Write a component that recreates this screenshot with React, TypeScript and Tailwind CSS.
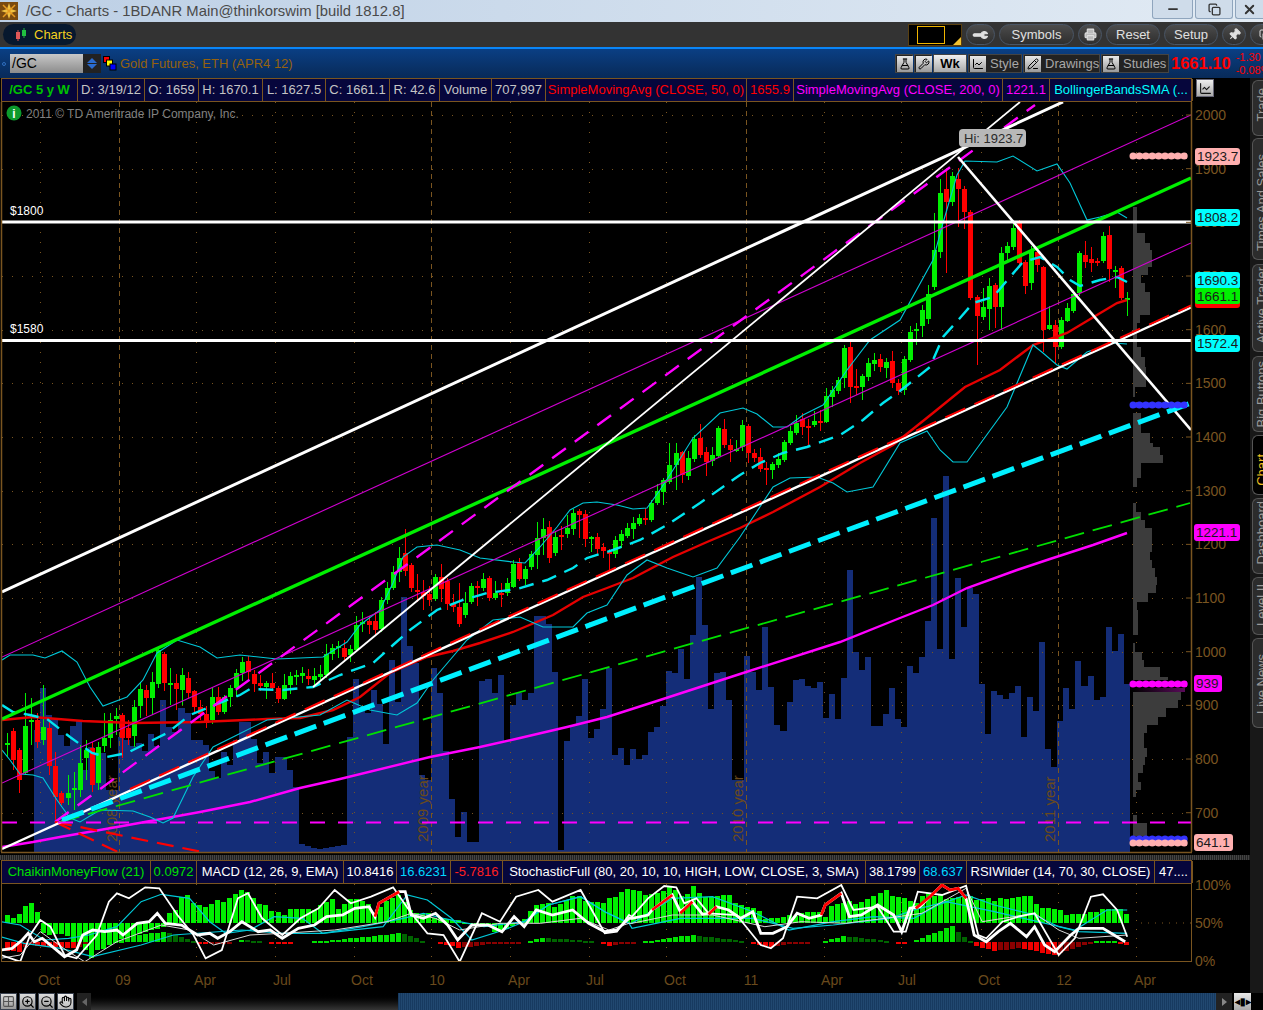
import { Wrench, Printer, Pin, Minus, X, Copy, ZoomIn, ZoomOut, Hand, Grid2x2, FlaskConical, PencilLine, ChartLine } from "lucide-react";

const py = (p: number) => 115 + (2000 - p) * 0.5367;

// volume bar tops, one per week, from x=34
const VOL = [
  730, 688, 715, 719, 735, 746, 726, 721, 770, 747, 753, 753, 790, 790, 737, 740, 746, 743, 751, 734, 746, 700, 727, 732, 708, 713,
  740, 740, 745, 771, 778, 752, 765, 740, 722, 722, 739, 763, 752, 773, 757, 757, 770, 787, 844, 846, 848, 849, 848, 847, 846, 845,
  737, 679, 707, 713, 690, 704, 744, 660, 702, 597, 646, 663, 775, 780, 668, 693, 751, 799, 837, 812, 842, 842, 681, 679, 693, 675,
  741, 705, 693, 700, 693, 616, 616, 624, 672, 850, 741, 725, 716, 679, 738, 729, 709, 668, 755, 748, 765, 749, 759, 755, 732, 727,
  706, 671, 673, 649, 679, 635, 577, 625, 709, 673, 672, 700, 780, 780,
  656, 672, 690, 627, 687, 725, 731, 702, 680, 679, 686, 688, 682, 718, 694, 719, 678, 570, 652, 670, 657, 726, 726, 714, 688, 719,
  727, 666, 673, 657, 621, 518, 649, 476, 659, 578, 627, 588, 594, 684, 734, 691, 695, 699, 693, 686, 737, 697, 711, 642, 749, 767,
  721, 688, 709, 661, 686, 676, 700, 697, 627, 651, 634, 684,
];

// candles as [open, close, wick top?, wick bottom?] in screen y
type Candle = [number, number, number?, number?];
const CANDLES: Candle[] = [
  [745, 743, 733, 757], [731, 760], [750, 780, 748, 793], [773, 726, 693, 775], [722, 720, 698, 745], [720, 742], [740, 727, 685, 745], [728, 766, 722, 775],
  [766, 797, 752, 820], [793, 803], [798, 793, 775, 805], [790, 788, 772, 810], [790, 763, 745, 797], [758, 750, 740, 780], [748, 785, 742, 792], [783, 747, 742, 790],
  [746, 738, 713, 752], [738, 720, 713, 748], [719, 716, 708, 735], [715, 738, 713, 758], [728, 738, 720, 745], [736, 707, 700, 747], [706, 689, 682, 718], [690, 698, 685, 716],
  [698, 682, 672, 715], [684, 650, 648, 688], [654, 683, 652, 691], [684, 683, 668, 705], [683, 689, 674, 710], [690, 675, 668, 705], [678, 693, 672, 698], [691, 707, 690, 712],
  [707, 714], [714, 723], [720, 697], [697, 712], [712, 697], [697, 688], [688, 673], [673, 662], [661, 672, 656, 680],
  [674, 684, 670, 692], [683, 686], [687, 683, 681, 699], [683, 688], [688, 699, 686, 703], [699, 685, 674, 700], [685, 676], [677, 675], [676, 673], [676, 679], [680, 676], [677, 674],
  [675, 654], [654, 648, 644, 660], [648, 646, 641, 658], [648, 657, 640, 660], [655, 649, 645, 662], [650, 625, 616, 652],
  [624, 622, 612, 632], [621, 625, 616, 634], [621, 630, 612, 636], [629, 600, 597, 632], [600, 588, 582, 604], [588, 572, 566, 590], [572, 558, 547, 582], [553, 571, 529, 576], [565, 588, 563, 592],
  [590, 591, 574, 602], [592, 596, 580, 610], [594, 600, 586, 606], [599, 577, 574, 601], [577, 589, 564, 602], [581, 604, 578, 610], [604, 607, 594, 612], [607, 624, 583, 627], [615, 603, 592, 618],
  [602, 586, 583, 604], [586, 587, 581, 606], [588, 579, 573, 591], [578, 598, 576, 601], [598, 593, 581, 600], [593, 595, 583, 607], [593, 583, 578, 596], [587, 564, 560, 588], [562, 579, 558, 581], [579, 569, 566, 585],
  [567, 554, 551, 570], [555, 538, 522, 569], [538, 529, 518, 555], [527, 558, 521, 563], [553, 537, 532, 556], [535, 537, 526, 550], [534, 528, 515, 538], [529, 513, 509, 535], [511, 515, 509, 538], [514, 539, 510, 547], [538, 537, 536, 552],
  [537, 549, 533, 556], [547, 551, 543, 558], [552, 553, 549, 570], [554, 540, 536, 558], [541, 534, 530, 548], [536, 528, 523, 538], [529, 523, 517, 539], [524, 518, 514, 526], [518, 519, 508, 525], [520, 503, 500, 522],
  [503, 491, 484, 505], [492, 480, 478, 505], [482, 465, 443, 484], [465, 453, 443, 490], [452, 475, 451, 483], [476, 458, 451, 480], [459, 439, 435, 462], [438, 455, 424, 458], [452, 462, 447, 476], [461, 455, 447, 466], [456, 428, 426, 458], [429, 445, 419, 448], [445, 450, 439, 462], [450, 449, 440, 452],
  [447, 425, 420, 451], [426, 453, 424, 463], [453, 458, 449, 462], [457, 469, 448, 472], [468, 469, 462, 485], [470, 464, 462, 479], [465, 459, 453, 468], [460, 442, 440, 462], [443, 431, 426, 445], [433, 423, 415, 435], [419, 427, 413, 435],
  [426, 427, 419, 445], [425, 421, 411, 427], [421, 423, 410, 431], [422, 396, 388, 423], [397, 390, 386, 407], [391, 380, 377, 394], [378, 348, 345, 388], [347, 387, 342, 403], [386, 387, 369, 395], [387, 376, 374, 400], [377, 363, 358, 381], [364, 360, 353, 371], [359, 367, 354, 372],
  [368, 362, 358, 378], [361, 383, 351, 388], [383, 391, 379, 395], [390, 359, 356, 395],
  [360, 332, 326, 362], [331, 329, 323, 345], [326, 310, 305, 337], [319, 294, 285, 324], [287, 250, 213, 290], [252, 193, 179, 258], [189, 202, 168, 273], [202, 176, 172, 206], [179, 189, 168, 227], [189, 212, 186, 229],
  [212, 298, 210, 300], [297, 316, 295, 365], [317, 307, 288, 320], [309, 286, 278, 330], [285, 307, 283, 328], [307, 253, 247, 330], [253, 246, 242, 260], [247, 228, 224, 250], [223, 263, 220, 268], [262, 286, 260, 294], [283, 250, 246, 290], [252, 265, 250, 272],
  [267, 330, 266, 352], [329, 325, 306, 330], [325, 347, 320, 363], [347, 320, 317, 349], [321, 308, 303, 322], [311, 294, 290, 313], [293, 253, 251, 296], [255, 262, 241, 268], [259, 263, 247, 272], [261, 263, 258, 266], [261, 236, 232, 263], [235, 269, 226, 282], [271, 270, 266, 288], [268, 298, 266, 300], [299, 298, 292, 316],
];

const SMA200 = "2,847 33,842 60,837 117,827 167,818 200,812 250,802 300,788 340,779 430,757 480,747 520,738 567,727 607,717 660,700 740,674 840,642 900,618 933,605 967,588 1017,570 1050,559 1093,545 1127,533";
const SMA50 = "2,720 33,717 83,721 133,723 200,722 267,719 300,718 333,710 360,697 390,673 427,657 453,651 480,643 513,632 553,615 583,597 607,588 633,578 673,557 707,542 740,528 773,512 820,487 860,463 893,445 933,413 965,387 1000,370 1033,345 1067,333 1097,315 1117,303 1127,300";
const BB_UP = "2,660 10,655 33,655 45,658 62,651 77,662 90,687 103,706 127,697 143,680 157,653 177,640 200,647 217,658 240,655 277,659 323,657 347,642 360,625 380,610 393,583 403,557 417,547 437,545 460,550 480,558 513,562 525,563 540,547 557,527 570,510 583,503 597,502 617,505 633,509 647,508 660,490 673,470 693,438 720,413 743,408 757,414 773,427 787,427 803,415 823,405 847,370 870,340 900,320 933,260 943,223 957,175 965,161 997,162 1013,156 1037,171 1057,164 1070,183 1087,220 1100,217 1117,212 1127,218";
const BB_LOW = "2,750 10,760 20,774 33,775 43,778 57,800 70,818 80,822 100,810 133,811 150,817 163,823 173,818 193,777 213,747 237,735 267,720 320,715 347,700 370,710 397,715 417,703 433,680 450,660 467,640 493,620 520,617 543,627 573,627 587,613 607,605 627,575 647,560 667,568 693,577 717,568 740,537 773,487 790,478 817,477 833,483 847,492 873,487 900,443 927,431 940,450 953,462 967,462 1007,407 1033,345 1043,353 1057,365 1067,369 1087,352 1113,343 1127,344";
const BB_MID = "2,705 13,712 30,715 47,719 70,737 92,753 107,757 127,753 143,745 167,733 190,715 207,708 240,695 250,689 283,690 313,687 340,675 373,663 393,645 410,630 437,610 463,600 487,593 517,589 547,580 573,568 587,558 613,550 640,540 667,525 700,503 740,475 760,463 783,453 807,447 840,435 863,420 883,403 900,391 930,367 943,337 960,318 973,303 993,297 1010,277 1023,262 1040,257 1057,267 1070,280 1080,286 1100,280 1117,277 1127,282";

// volume profile steps: [top, bottom, right x]
const PROFILE: [number, number, number][] = [
  [207, 217, 1137], [217, 233, 1137], [233, 243, 1145], [243, 250, 1150], [250, 267, 1152], [267, 275, 1148], [275, 283, 1141], [283, 292, 1145], [292, 315, 1150], [315, 323, 1140], [323, 347, 1137],
  [347, 357, 1141], [357, 367, 1145], [367, 387, 1146], [387, 397, 1135], [413, 433, 1141], [433, 443, 1150], [443, 447, 1153], [447, 455, 1160], [455, 463, 1163], [463, 478, 1141], [478, 487, 1137],
  [480, 487, 1137], [503, 512, 1136], [512, 520, 1141], [520, 528, 1145], [528, 552, 1152], [552, 560, 1150], [560, 568, 1152], [568, 577, 1155], [577, 585, 1157], [585, 593, 1156], [593, 602, 1148], [602, 610, 1137],
  [610, 635, 1138], [643, 652, 1135], [652, 660, 1142], [660, 667, 1144], [667, 677, 1160], [677, 680, 1168], [690, 700, 1181], [700, 708, 1178], [708, 717, 1166], [717, 725, 1158], [725, 733, 1147], [733, 748, 1144],
  [748, 757, 1147], [757, 765, 1145], [765, 773, 1143], [773, 782, 1138], [782, 790, 1141], [790, 797, 1136], [815, 823, 1137], [823, 836, 1147],
];

const interp = (pts: [number, number][], x: number) => {
  if (x <= pts[0][0]) return pts[0][1];
  for (let i = 1; i < pts.length; i++) {
    if (x <= pts[i][0]) {
      const [x0, y0] = pts[i - 1];
      const [x1, y1] = pts[i];
      return y0 + ((y1 - y0) * (x - x0)) / (x1 - x0);
    }
  }
  return pts[pts.length - 1][1];
};

// lower panel readings are given as pairs on two crops, left half and right half
const left = (a: number[]): [number, number][] => {
  const out: [number, number][] = [];
  for (let i = 0; i < a.length; i += 2) out.push([a[i] / 2.48, 855 + a[i + 1] / 3]);
  return out;
};
const right = (a: number[]): [number, number][] => {
  const out: [number, number][] = [];
  for (let i = 0; i < a.length; i += 2) out.push([632 + a[i] / 2.484, 855 + a[i + 1] / 3]);
  return out;
};
const line = (p: [number, number][]) => p.map(([x, y]) => `${x.toFixed(1)},${y.toFixed(1)}`).join(" ");

const CMF = [
  ...left([17, 187, 45, 178, 60, 158, 75, 140, 92, 172, 110, 235, 150, 237, 170, 250, 190, 262, 210, 280, 228, 315, 245, 285, 265, 270, 285, 265, 340, 235, 400, 225, 420, 170, 435, 165, 450, 130, 465, 125, 490, 145, 510, 155, 540, 142, 570, 125, 600, 108, 630, 125, 645, 145, 660, 150, 675, 175, 700, 178, 720, 160, 770, 170, 790, 150, 825, 135, 840, 170, 855, 140, 875, 125, 910, 150, 930, 170, 960, 135, 990, 125, 1005, 135, 1020, 165, 1040, 178, 1090, 185, 1130, 200, 1180, 205, 1220, 225, 1260, 222, 1290, 205, 1310, 170, 1330, 150, 1380, 150, 1420, 125, 1480, 140, 1500, 150, 1520, 125, 1550, 100]),
  ...right([20, 115, 75, 112, 95, 100, 115, 100, 130, 135, 150, 90, 165, 120, 240, 125, 275, 150, 305, 165, 330, 185, 380, 190, 425, 170, 480, 180, 495, 150, 565, 140, 600, 125, 615, 125, 630, 95, 650, 125, 670, 125, 690, 145, 710, 135, 730, 110, 750, 125, 885, 130, 905, 145, 925, 125, 985, 125, 1020, 155, 1060, 170, 1135, 180, 1150, 165, 1170, 160, 1230, 170]),
];
const MACD: [number, number][] = [
  [3, -8], [20, -10], [28, -3], [52, -5], [76, -6], [90, 0], [119, 0], [125, 6], [165, 10], [190, 2], [197, 0], [204, -2], [232, -1], [238, 0], [240, 2], [262, 1], [268, 0], [274, -1], [292, -1], [300, 0], [325, 1], [403, 9], [423, 1], [432, 0], [440, -1], [460, -6], [490, -2], [520, -1], [526, 0], [530, 1], [542, 4], [592, 1], [598, 0], [602, -1], [609, -4], [632, -1], [640, 0], [648, 1], [692, 7], [745, 1], [750, -1], [769, -5], [797, -1], [820, 0], [825, 1], [843, 6], [888, 1], [892, 0], [896, -1], [906, -1], [910, 0], [914, 1], [952, 16], [968, 2], [972, 0], [974, -3], [994, -9], [1020, -6], [1055, -13], [1087, -2], [1092, 0], [1095, 1], [1115, 1], [1119, 0], [1123, -3], [1129, -3],
];

const RSI = [
  ...left([2, 285, 30, 280, 55, 255, 70, 235, 85, 260, 105, 250, 130, 275, 160, 305, 190, 285, 205, 240, 230, 225, 260, 230, 290, 225, 305, 240, 340, 205, 370, 200, 390, 175, 410, 205, 450, 210, 490, 240, 520, 235, 540, 250, 570, 230, 600, 200, 640, 230, 670, 225, 700, 250, 740, 220, 780, 210, 810, 185, 850, 180, 880, 160, 915, 155, 930, 185, 940, 145, 990, 110, 1005, 110, 1020, 180, 1050, 190, 1080, 175, 1110, 210, 1135, 255, 1170, 210, 1210, 210, 1245, 230, 1275, 185, 1300, 215, 1330, 165, 1370, 180, 1420, 165, 1460, 205, 1500, 230, 1530, 225, 1560, 190]),
  ...right([0, 190, 40, 180, 50, 165, 100, 120, 120, 170, 150, 140, 175, 178, 190, 175, 210, 155, 240, 165, 270, 190, 300, 170, 320, 235, 350, 235, 385, 215, 410, 175, 440, 190, 470, 180, 480, 150, 520, 115, 540, 185, 570, 180, 610, 150, 650, 180, 670, 230, 690, 160, 715, 155, 740, 125, 770, 90, 790, 105, 810, 100, 830, 130, 850, 240, 880, 260, 910, 230, 940, 205, 980, 245, 1000, 215, 1025, 270, 1050, 290, 1090, 240, 1110, 220, 1170, 220, 1190, 235, 1225, 260]),
];
const STOCH = [
  ...left([2, 300, 50, 320, 75, 240, 100, 195, 125, 215, 160, 300, 190, 310, 240, 240, 270, 140, 290, 115, 320, 130, 360, 97, 395, 100, 440, 180, 480, 240, 510, 310, 550, 285, 590, 130, 615, 115, 650, 190, 700, 240, 745, 190, 790, 160, 830, 105, 870, 145, 920, 125, 975, 97, 1020, 175, 1060, 235, 1100, 240, 1140, 320, 1195, 175, 1240, 200, 1280, 125, 1335, 105, 1370, 140, 1440, 105, 1500, 235, 1530, 230, 1560, 180]),
  ...right([0, 185, 40, 130, 80, 93, 110, 97, 130, 145, 160, 130, 190, 175, 260, 180, 320, 270, 345, 280, 375, 250, 410, 125, 460, 130, 520, 90, 550, 165, 610, 155, 650, 230, 680, 230, 710, 110, 770, 120, 830, 92, 860, 240, 880, 250, 920, 200, 960, 185, 1000, 175, 1060, 300, 1100, 250, 1140, 125, 1170, 118, 1205, 165, 1230, 245]),
];
const SLOW = [
  ...left([2, 310, 50, 300, 100, 230, 170, 290, 210, 320, 290, 260, 400, 210, 470, 225, 530, 270, 620, 240, 700, 235, 830, 225, 960, 200, 1020, 175, 1080, 190, 1140, 225, 1240, 205, 1340, 205, 1440, 190, 1510, 225, 1560, 205]),
  ...right([0, 205, 100, 180, 200, 180, 330, 215, 420, 200, 530, 205, 660, 185, 720, 175, 830, 100, 870, 200, 1000, 175, 1060, 225, 1110, 250, 1230, 240]),
];
const CYAN_A = [
  ...left([2, 200, 50, 210, 110, 255, 170, 250, 220, 240, 290, 215, 350, 140, 400, 118, 470, 130, 520, 200, 560, 235, 620, 225, 680, 185, 750, 190, 800, 235, 900, 215, 1000, 190, 1050, 175, 1100, 190, 1200, 215, 1300, 200, 1360, 150, 1440, 125, 1500, 170, 1560, 205]),
  ...right([0, 205, 100, 130, 200, 125, 300, 170, 390, 225, 500, 200, 600, 185, 700, 190, 760, 150, 830, 120, 900, 150, 1000, 180, 1060, 215, 1110, 230, 1230, 235]),
];
const CYAN_B = [
  ...left([2, 245, 60, 265, 150, 280, 230, 305, 350, 270, 430, 240, 600, 225, 700, 235, 800, 235, 950, 215, 1010, 120, 1060, 135, 1120, 190, 1170, 255, 1250, 225, 1300, 200, 1360, 150, 1440, 125, 1500, 170, 1560, 205]),
  ...right([0, 220, 120, 190, 300, 190, 400, 220, 500, 210, 640, 190, 700, 165, 780, 140, 900, 170, 1100, 225, 1180, 165, 1230, 165]),
];
const RED_SEGS = [
  left([930, 185, 940, 145, 990, 110]),
  right([50, 165, 100, 120]),
  right([120, 175, 150, 140]),
  right([190, 178, 210, 155]),
  right([470, 180, 480, 150, 520, 115]),
  right([705, 160, 740, 125, 770, 90, 790, 105, 810, 100, 830, 130]),
];

const PRICES = [2000, 1900, 1800, 1700, 1600, 1500, 1400, 1300, 1200, 1100, 1000, 900, 800, 700];
const TICKS = [40, 118.5, 196, 275, 353.6, 431, 510, 589, 666, 745.5, 823.6, 901, 980.6, 1058.3, 1136.4];
const YEARS = [118.5, 431, 745.5, 1058.3];
const LEVEL_TAGS = [
  { label: "1923.7", x: 1195, y: 148, w: 45, bg: "#ffb0b0" },
  { label: "1808.2", x: 1195, y: 209, w: 45, bg: "#00ffff" },
  { label: "1690.3", x: 1195, y: 272, w: 45, bg: "#00ffff" },
  { label: "1572.4", x: 1195, y: 335, w: 45, bg: "#00ffff" },
  { label: "1221.1", x: 1194, y: 524, w: 46, bg: "#ff00ff" },
  { label: "939", x: 1194, y: 675, w: 28, bg: "#ff00ff" },
  { label: "641.1", x: 1194, y: 834, w: 39, bg: "#ffb0b0" },
];
const DOTS = [
  { y: 156, x: 1133, c: "#ffb0b0" },
  { y: 405, x: 1133, c: "#3333ff" },
  { y: 684, x: 1133, c: "#ff00ff" },
  { y: 839, x: 1133, c: "#3333ff" },
  { y: 843, x: 1133, c: "#ffb0b0" },
];

function MainChart() {
  return (
    <svg width={1250} height={753} viewBox="0 102 1250 753" className="block bg-black">
      <defs>
        <clipPath id="plot">
          <rect x={2} y={102} width={1189} height={750} />
        </clipPath>
        <linearGradient id="poc" x1="0" x2="1" y1="0" y2="0">
          <stop offset="0" stopColor="#000000" />
          <stop offset="1" stopColor="#5a0a5a" />
        </linearGradient>
      </defs>
      <g clipPath="url(#plot)">
        {VOL.map((t, i) => {
          const x = Math.round(34 + 6.02 * i);
          const next = Math.round(34 + 6.02 * (i + 1));
          return <rect key={i} x={x} y={t} width={next - x} height={852 - t} fill="#142d78" shapeRendering="crispEdges" />;
        })}
        {PRICES.map((p) => (
          <line key={p} x1={2} x2={1191} y1={Math.round(py(p)) + 0.5} y2={Math.round(py(p)) + 0.5} stroke="#7a5520" strokeDasharray="1 9" />
        ))}
        {TICKS.map((x) => (
          <line
            key={x}
            x1={Math.round(x) + 0.5}
            x2={Math.round(x) + 0.5}
            y1={102}
            y2={852}
            stroke="#7a5520"
            strokeDasharray={YEARS.includes(x) ? "5 4" : "1 9"}
          />
        ))}
        {PROFILE.map(([a, b, r], i) => (
          <rect key={i} x={1133} y={a} width={r - 1133} height={b - a} fill="#3c3c3c" shapeRendering="crispEdges" />
        ))}
        <rect x={1133} y={688} width={52} height={4} fill="url(#poc)" />
        {[
          ["2008 year", 117],
          ["2009 year", 428],
          ["2010 year", 743],
          ["2011 year", 1055],
        ].map(([t, x]) => (
          <text key={t} transform={`rotate(-90 ${x} 842)`} x={x} y={842} fontSize={15} fill="#6a4a1c">
            {t}
          </text>
        ))}

        {CANDLES.map(([o, c, hi, lo], k) => {
          const x = Math.round(7.3 + 6.02 * k);
          const up = c < o;
          const col = up ? "#00f000" : "#ff0000";
          const top = Math.min(o, c);
          const bottom = Math.max(o, c);
          return (
            <g key={k} shapeRendering="crispEdges">
              <rect x={x} y={hi ?? top - 2 - ((k * 37) % 9)} width={1} height={(lo ?? bottom + 2 + ((k * 53) % 9)) - (hi ?? top - 2 - ((k * 37) % 9))} fill={col} />
              <rect x={x - 2} y={top} width={5} height={Math.max(bottom - top, 2)} fill={col} />
            </g>
          );
        })}

        <polyline points={SMA200} fill="none" stroke="#ff00ff" strokeWidth={2.4} />
        <polyline points={SMA50} fill="none" stroke="#e60000" strokeWidth={2.4} />
        <polyline points={BB_UP} fill="none" stroke="#00c8d8" strokeWidth={1.1} />
        <polyline points={BB_LOW} fill="none" stroke="#00c8d8" strokeWidth={1.1} />
        <polyline points={BB_MID} fill="none" stroke="#00e6f0" strokeWidth={2.4} strokeDasharray="15 9" />

        <line x1={2} y1={657} x2={1191} y2={115} stroke="#d000d0" strokeWidth={1.1} />
        <line x1={2} y1={783} x2={1191} y2={243} stroke="#d000d0" strokeWidth={1.1} />
        <line x1={2} y1={719} x2={1191} y2={178} stroke="#00f000" strokeWidth={3.4} />
        <line x1={55} y1={822} x2={1035} y2={105} stroke="#ff00ff" strokeWidth={2.4} strokeDasharray="17 11" />
        <line x1={2} y1={592} x2={1063} y2={102} stroke="#ffffff" strokeWidth={3} />
        <line x1={313} y1={687} x2={1020} y2={102} stroke="#ffffff" strokeWidth={1.8} />
        <line x1={958} y1={157} x2={1191} y2={430} stroke="#ffffff" strokeWidth={2.6} />
        <line x1={55} y1={822} x2={207} y2={853} stroke="#ff0000" strokeWidth={2.2} strokeDasharray="17 9" />
        <line x1={55} y1={822} x2={120} y2={853} stroke="#ff0000" strokeWidth={2.2} strokeDasharray="17 9" />
        <line x1={2} y1={849} x2={1191} y2={307.5} stroke="#ffffff" strokeWidth={2.4} />
        <line x1={130} y1={789} x2={1191} y2={305.5} stroke="#ff0000" strokeWidth={2} strokeDasharray="22 10" />
        <line x1={60} y1={822} x2={1190} y2={503} stroke="#00e000" strokeWidth={1.8} strokeDasharray="20 9" />
        <line x1={62} y1={820} x2={1191} y2={403} stroke="#00f0ff" strokeWidth={5} strokeDasharray="23 8" />
        <line x1={2} y1={822.5} x2={1191} y2={822.5} stroke="#ff00ff" strokeWidth={1.8} strokeDasharray="15 13" />
        <line x1={2} y1={222} x2={1191} y2={222} stroke="#ffffff" strokeWidth={3} />
        <line x1={2} y1={340.5} x2={1191} y2={340.5} stroke="#ffffff" strokeWidth={3} />

        {DOTS.map((d) => (
          <g key={d.y}>
            <line x1={d.x} x2={1187} y1={d.y} y2={d.y} stroke={d.c} strokeWidth={7} strokeLinecap="round" strokeDasharray="0 6.4" />
            <line x1={d.x} x2={1187} y1={d.y} y2={d.y} stroke={d.c} strokeWidth={5} />
          </g>
        ))}
      </g>

      <text x={10} y={215} fontSize={12} fill="#ffffff">$1800</text>
      <text x={10} y={333} fontSize={12} fill="#ffffff">$1580</text>

      <rect x={959} y={129} width={67} height={18} rx={4} fill="#b8b8b8" />
      <text x={964} y={143} fontSize={13} fill="#2a2a2a">Hi: 1923.7</text>

      <circle cx={14} cy={113} r={7.5} fill="#0c9a2c" />
      <text x={14} y={118} fontSize={12} fontWeight={700} fill="#ffffff" textAnchor="middle">i</text>
      <text x={26} y={118} fontSize={12} fill="#808080">2011 © TD Ameritrade IP Company, Inc.</text>

      <line x1={1.5} x2={1.5} y1={102} y2={852} stroke="#7a5520" strokeWidth={1.5} />
      <line x1={1191.5} x2={1191.5} y1={102} y2={852} stroke="#7a5520" strokeWidth={1.5} />
      <line x1={1} x2={1192} y1={852.5} y2={852.5} stroke="#7a5520" strokeWidth={1.5} />

      {PRICES.map((p) => (
        <g key={p}>
          <line x1={1186} x2={1191} y1={py(p)} y2={py(p)} stroke="#7a5520" />
          <text x={1195} y={py(p) + 5} fontSize={14} fill="#7a5520">{p}</text>
        </g>
      ))}

      {LEVEL_TAGS.map((t) => (
        <g key={t.label}>
          <rect x={t.x} y={t.y} width={t.w} height={17} rx={3} fill={t.bg} />
          <text x={t.x + 2} y={t.y + 13} fontSize={13.5} fill="#1a1a1a">{t.label}</text>
        </g>
      ))}
      <rect x={1195} y={288} width={45} height={20} rx={3} fill="#ff0000" />
      <rect x={1195} y={288} width={45} height={16} rx={2} fill="#00f000" />
      <text x={1197} y={301} fontSize={13.5} fill="#1a1a1a">1661.1</text>
    </svg>
  );
}

function LowerChart() {
  return (
    <svg width={1250} height={110} viewBox="0 883 1250 110" className="block overflow-visible bg-black">
      <defs>
        <clipPath id="lower">
          <rect x={2} y={884} width={1189} height={77} />
        </clipPath>
      </defs>
      {TICKS.map((x) => (
        <line key={x} x1={Math.round(x) + 0.5} x2={Math.round(x) + 0.5} y1={884} y2={962} stroke="#7a5520" strokeDasharray="1 8" />
      ))}
      <g clipPath="url(#lower)">
        {Array.from({ length: 187 }).map((_, k) => {
          const x = Math.round(4.6 + 6.02 * k);
          const y = Math.round(interp(CMF, x + 2.5) + ((k * 29) % 5) - 2);
          return <rect key={k} x={x} y={Math.min(y, 923)} width={5} height={Math.abs(923 - y)} fill="#00f000" shapeRendering="crispEdges" />;
        })}
        {Array.from({ length: 187 }).map((_, k) => {
          const x = Math.round(4.6 + 6.02 * k);
          const h = interp(MACD, x + 2.5);
          const prev = interp(MACD, x - 3.5);
          if (Math.abs(h) < 0.5) return null;
          const col = h > 0 ? (h >= prev ? "#00e000" : "#006400") : h <= prev ? "#f00000" : "#8a0000";
          return <rect key={k} x={x} y={Math.round(h > 0 ? 942 - h : 942)} width={5} height={Math.max(Math.round(Math.abs(h)), 2)} fill={col} shapeRendering="crispEdges" />;
        })}
        <line x1={1191} x2={1136} y1={923} y2={923} stroke="#7a5520" strokeDasharray="1 6" />
        <polyline points={line(CYAN_A)} fill="none" stroke="#00c8d8" strokeWidth={1.2} />
        <polyline points={line(CYAN_B)} fill="none" stroke="#00c8d8" strokeWidth={1.2} />
        <polyline points={line(SLOW)} fill="none" stroke="#d8d8d8" strokeWidth={1} />
        <polyline points={line(STOCH)} fill="none" stroke="#ffffff" strokeWidth={1.8} />
        <polyline points={line(RSI)} fill="none" stroke="#ffffff" strokeWidth={2.8} />
        {RED_SEGS.map((s, i) => (
          <polyline key={i} points={line(s)} fill="none" stroke="#ff0000" strokeWidth={2.8} />
        ))}
      </g>
      <rect x={1.5} y={883.5} width={1190} height={78} fill="none" stroke="#7a5520" strokeWidth={1} />
      {[
        ["100%", 890],
        ["50%", 928],
        ["0%", 966],
      ].map(([t, y]) => (
        <text key={t} x={1195} y={y} fontSize={14} fill="#7a5520">{t}</text>
      ))}
      {[
        ["Oct", 49],
        ["09", 123],
        ["Apr", 205],
        ["Jul", 282],
        ["Oct", 362],
        ["10", 437],
        ["Apr", 519],
        ["Jul", 595],
        ["Oct", 675],
        ["11", 751],
        ["Apr", 832],
        ["Jul", 907],
        ["Oct", 989],
        ["12", 1064],
        ["Apr", 1145],
      ].map(([t, x]) => (
        <text key={`${t}${x}`} x={x} y={985} fontSize={14} fill="#6a4a1c" textAnchor="middle">{t}</text>
      ))}
    </svg>
  );
}

function Cell({ w, color, bold, children }: { w: number; color: string; bold?: boolean; children: string }) {
  return (
    <div
      style={{ width: w, color }}
      className={`flex h-full shrink-0 items-center justify-center overflow-hidden whitespace-nowrap border-r border-[#7a5520] text-[13px] ${bold ? "font-bold" : ""}`}
    >
      {children}
    </div>
  );
}

const TOP_CELLS: [number, string, string, boolean?][] = [
  [76, "#00c000", "/GC 5 y W", true],
  [67, "#c4c4c4", "D: 3/19/12"],
  [54, "#c4c4c4", "O: 1659"],
  [64, "#c4c4c4", "H: 1670.1"],
  [63, "#c4c4c4", "L: 1627.5"],
  [64, "#c4c4c4", "C: 1661.1"],
  [50, "#c4c4c4", "R: 42.6"],
  [52, "#c4c4c4", "Volume"],
  [54, "#c4c4c4", "707,997"],
  [201, "#ff0000", "SimpleMovingAvg (CLOSE, 50, 0)"],
  [47, "#ff0000", "1655.9"],
  [209, "#ff00ff", "SimpleMovingAvg (CLOSE, 200, 0)"],
  [47, "#ff00ff", "1221.1"],
  [143, "#00ffff", "BollingerBandsSMA (..."],
];
const LOW_CELLS: [number, string, string][] = [
  [149, "#00e000", "ChaikinMoneyFlow (21)"],
  [46, "#00e000", "0.0972"],
  [147, "#ffffff", "MACD (12, 26, 9, EMA)"],
  [53, "#ffffff", "10.8416"],
  [54, "#00d8ff", "16.6231"],
  [52, "#ff2020", "-5.7816"],
  [363, "#ffffff", "StochasticFull (80, 20, 10, 10, HIGH, LOW, CLOSE, 3, SMA)"],
  [54, "#ffffff", "38.1799"],
  [47, "#00d8ff", "68.637"],
  [188, "#ffffff", "RSIWilder (14, 70, 30, CLOSE)"],
  [38, "#ffffff", "47...."],
];

function Pill({ children, w }: { children: React.ReactNode; w: number }) {
  return (
    <div
      style={{ width: w }}
      className="flex h-[21px] shrink-0 items-center justify-center rounded-full border border-[#4a5666] bg-linear-to-b from-[#4c4c4c] to-[#2e2e2e] text-[13px] text-[#e0e0e0]"
    >
      {children}
    </div>
  );
}

function ToolBtn({ children, w, wide }: { children: React.ReactNode; w: number; wide?: boolean }) {
  return (
    <div
      style={{ width: w }}
      className={`flex h-[19px] shrink-0 items-center gap-1 border border-[#444] bg-[#222] pl-px text-[13px] text-[#a8a8a8] ${wide ? "" : "justify-center"}`}
    >
      {children}
    </div>
  );
}

function IconBox({ children }: { children: React.ReactNode }) {
  return (
    <div className="flex h-4 w-4 shrink-0 items-center justify-center bg-linear-to-b from-[#e8e8e8] to-[#9a9a9a] text-black">{children}</div>
  );
}

function Tab({ h, label, active, mt = 0, pb = 8 }: { h: number; label: string; active?: boolean; mt?: number; pb?: number }) {
  return (
    <div
      style={{ height: h, marginTop: mt }}
      className={`relative w-[11px] overflow-hidden rounded-tl-[6px] rounded-bl-[6px] border-l border-t border-b border-[#555] ${active ? "bg-black" : "bg-[#2c2c2c]"}`}
    >
      <span
        style={{ bottom: pb }}
        className={`absolute left-[2px] whitespace-nowrap text-[13px] leading-[14px] [writing-mode:vertical-rl] rotate-180 ${active ? "text-[#f0c020]" : "text-[#9a9a9a]"}`}
      >
        {label}
      </span>
    </div>
  );
}

export default function App() {
  return (
    <div className="flex h-[1010px] w-[1263px] flex-col overflow-hidden bg-black [font-family:'Liberation_Sans',Arial,sans-serif]">
      {/* title bar */}
      <div className="flex h-[22px] shrink-0 items-start bg-linear-to-r from-[#bccfe5] to-[#e2ebf4]">
        <svg width={18} height={18} viewBox="0 0 18 18" className="mt-0.5 shrink-0">
          <rect width={18} height={18} fill="#7a4a10" />
          <path d="M9 1 L11 7 L17 9 L11 11 L9 17 L7 11 L1 9 L7 7 Z" fill="#f0c040" />
          <path d="M3 3 L15 15 M15 3 L3 15" stroke="#e89a20" strokeWidth={1.5} />
        </svg>
        <span className="ml-2 mt-0.5 text-[14.8px] leading-[18px] text-[#4a4a4a]">/GC - Charts - 1BDANR Main@thinkorswim [build 1812.8]</span>
        <div className="ml-auto flex h-[19px] gap-0.5">
          <div className="flex w-[41px] items-center justify-center rounded-b-[3px] border border-t-0 border-[#8fa5bd] bg-[#cfdcea] text-[#333]">
            <Minus size={14} strokeWidth={3} />
          </div>
          <div className="flex w-[38px] items-center justify-center rounded-b-[3px] border border-t-0 border-[#8fa5bd] bg-[#cfdcea] text-[#333]">
            <Copy size={13} strokeWidth={2.4} />
          </div>
          <div className="flex w-[28px] items-center justify-center rounded-bl-[3px] border border-t-0 border-r-0 border-[#8fa5bd] bg-[#cfdcea] text-[#333]">
            <X size={15} strokeWidth={3} />
          </div>
        </div>
      </div>

      {/* workspace toolbar */}
      <div className="flex h-[25px] shrink-0 items-center bg-[#333333]">
        <div className="ml-[3px] flex h-[21px] w-[73px] shrink-0 items-center gap-1.5 rounded-full bg-[#07182e] pl-[11px] text-[13px] text-[#f4d020]">
          <svg width={14} height={14} viewBox="0 0 14 14" className="shrink-0">
            <path d="M4 2 V13" stroke="#d05050" />
            <rect x={2} y={4} width={4} height={7} fill="#e05858" />
            <path d="M10 0 V10" stroke="#20b040" />
            <rect x={8} y={2} width={4} height={6} fill="#20c040" />
          </svg>
          Charts
        </div>
        <div className="relative ml-[832px] flex h-[22px] w-[54px] shrink-0 items-center border border-[#5a4010] bg-black pl-2">
          <div className="h-[18px] w-7 border border-[#f0b400]" />
          <div className="absolute bottom-0 right-0 h-0 w-0 border-b-[8px] border-l-[8px] border-b-[#f0c030] border-l-transparent" />
        </div>
        <div className="ml-1 flex items-center gap-1">
          <Pill w={29}>
            <Wrench size={14} className="rotate-45" fill="#e0e0e0" />
          </Pill>
          <Pill w={75}>Symbols</Pill>
          <Pill w={24}>
            <Printer size={13} fill="#bbb" />
          </Pill>
          <Pill w={54}>Reset</Pill>
          <Pill w={54}>Setup</Pill>
          <Pill w={24}>
            <Pin size={13} className="rotate-45" fill="#e0e0e0" />
          </Pill>
          <Pill w={30}>
            <Copy size={12} />
          </Pill>
        </div>
      </div>
      <div className="h-[2px] shrink-0 bg-[#0a86f8]" />

      {/* symbol row */}
      <div className="flex h-[29px] shrink-0 items-center bg-linear-to-b from-[#0a3f84] to-[#082a58]">
        <div className="ml-0.5 h-1 w-1 shrink-0 rounded-full border border-[#3070c0]" />
        <div className="ml-1 flex h-[19px] w-[73px] shrink-0 items-center bg-linear-to-b from-[#c8c8c8] to-[#8c8c8c] pl-0.5 text-[14px] text-black">/GC</div>
        <div className="flex h-[19px] w-[18px] shrink-0 flex-col items-center justify-center gap-px bg-[#222]">
          <div className="h-0 w-0 border-x-[5px] border-b-[5px] border-x-transparent border-b-[#2a6cd0]" />
          <div className="h-0 w-0 border-x-[5px] border-t-[5px] border-x-transparent border-t-[#2a6cd0]" />
        </div>
        <svg width={14} height={15} viewBox="0 0 14 15" className="ml-[2px] shrink-0">
          <rect x={0.5} y={0.5} width={6} height={6} fill="#ff0000" stroke="#000" />
          <rect x={3.5} y={4} width={6} height={6} fill="#ffff00" stroke="#000" />
          <rect x={7} y={8} width={6} height={6} fill="#0000ff" stroke="#000" />
        </svg>
        <span className="ml-[3px] w-[172px] shrink-0 whitespace-nowrap text-[13px] text-[#96620e]">Gold Futures, ETH (APR4 12)</span>
        <div className="ml-[603px] flex h-[19px] shrink-0 items-center gap-px">
          <ToolBtn w={18}>
            <IconBox>
              <FlaskConical size={12} />
            </IconBox>
          </ToolBtn>
          <ToolBtn w={18}>
            <IconBox>
              <Wrench size={12} />
            </IconBox>
          </ToolBtn>
          <div className="flex h-[19px] w-[34px] items-center justify-center border border-[#444] bg-linear-to-b from-[#f0f0f0] to-[#aaaaaa] text-[13px] font-bold text-black">Wk</div>
          <ToolBtn w={54} wide>
            <IconBox>
              <ChartLine size={12} />
            </IconBox>
            Style
          </ToolBtn>
          <ToolBtn w={77} wide>
            <IconBox>
              <PencilLine size={12} />
            </IconBox>
            Drawings
          </ToolBtn>
          <ToolBtn w={68} wide>
            <IconBox>
              <FlaskConical size={12} />
            </IconBox>
            Studies
          </ToolBtn>
        </div>
        <span className="ml-0.5 shrink-0 text-[16.5px] font-bold text-[#ff0000]">1661.10</span>
        <div className="ml-[5px] flex flex-col text-[11px] leading-[13px] text-[#ff0000]">
          <span>-1.30</span>
          <span className="whitespace-nowrap">-0.08%</span>
        </div>
      </div>

      <div className="flex min-h-0 flex-1">
        <div className="flex w-[1250px] shrink-0 flex-col">
          {/* study header */}
          <div className="flex h-6 shrink-0">
            <div className="ml-px flex h-6 w-[1191px] border border-[#7a5520] bg-[#06063c]">
              {TOP_CELLS.map(([w, c, t, b]) => (
                <Cell key={t} w={w} color={c} bold={b}>
                  {t}
                </Cell>
              ))}
            </div>
            <div className="ml-[4px] mt-px flex h-[18px] w-[18px] items-center justify-center border border-[#667] bg-linear-to-b from-[#eeeeee] to-[#aaaaaa]">
              <ChartLine size={13} color="#111" />
            </div>
          </div>

          <MainChart />

          <div className="h-[5px] shrink-0 bg-[repeating-linear-gradient(90deg,#444_0px,#444_1px,#222_1px,#222_2px)]" />

          <div className="ml-px flex h-[23px] w-[1191px] shrink-0 border border-b-0 border-[#7a5520] bg-[#06063c]">
            {LOW_CELLS.map(([w, c, t]) => (
              <Cell key={t} w={w} color={c}>
                {t}
              </Cell>
            ))}
          </div>

          <LowerChart />
        </div>

        {/* side tabs */}
        <div className="flex w-[13px] shrink-0 flex-col items-end bg-[#181818] pt-0.5">
          <Tab h={56} label="Trade" pb={14} />
          <Tab h={122} label="Times And Sales" mt={2} />
          <Tab h={88} label="Active Trader" mt={4} pb={7} />
          <Tab h={76} label="Big Buttons" mt={4} pb={4} />
          <Tab h={60} label="Chart" active mt={3} />
          <Tab h={76} label="Dashboard" mt={3} />
          <Tab h={58} label="Level II" mt={3} />
          <Tab h={90} label="Live News" mt={3} pb={13} />
        </div>
      </div>

      {/* bottom scroll strip */}
      <div className="flex h-[17px] shrink-0 items-center bg-black">
        <div className="flex gap-0.5">
          <div className="flex h-[17px] w-[17px] items-center justify-center border border-[#3a4250] bg-linear-to-b from-[#dddddd] to-[#999999] text-[#555]">
            <Grid2x2 size={13} />
          </div>
          <div className="flex h-[17px] w-[17px] items-center justify-center border border-[#3a4250] bg-linear-to-b from-[#dddddd] to-[#999999] text-black">
            <ZoomIn size={14} />
          </div>
          <div className="flex h-[17px] w-[17px] items-center justify-center border border-[#3a4250] bg-linear-to-b from-[#dddddd] to-[#999999] text-black">
            <ZoomOut size={14} />
          </div>
          <div className="flex h-[17px] w-[17px] items-center justify-center border border-[#3a4250] bg-linear-to-b from-[#eeeeee] to-[#bbbbbb] text-black">
            <Hand size={13} />
          </div>
        </div>
        <div className="ml-[3px] flex h-[17px] w-[14px] items-center justify-center bg-[#222]">
          <div className="h-0 w-0 border-y-[4px] border-r-[5px] border-y-transparent border-r-[#666]" />
        </div>
        <div className="h-[17px] w-[307px] bg-linear-to-b from-[#000000] to-[#363636]" />
        <div className="h-[17px] w-[818px] bg-[repeating-linear-gradient(90deg,#173a60_0px,#173a60_1px,#214870_1px,#214870_2px)]" />
        <div className="flex h-[17px] w-[16px] items-center justify-center bg-[#222]">
          <div className="h-0 w-0 border-y-[4px] border-l-[5px] border-y-transparent border-l-[#888]" />
        </div>
        <div className="ml-0.5 flex h-[17px] w-[17px] items-center justify-center bg-linear-to-b from-[#e8e8e8] to-[#aaaaaa] text-[10px] font-bold leading-none text-black">
          ◂▮▸
        </div>
      </div>
    </div>
  );
}
